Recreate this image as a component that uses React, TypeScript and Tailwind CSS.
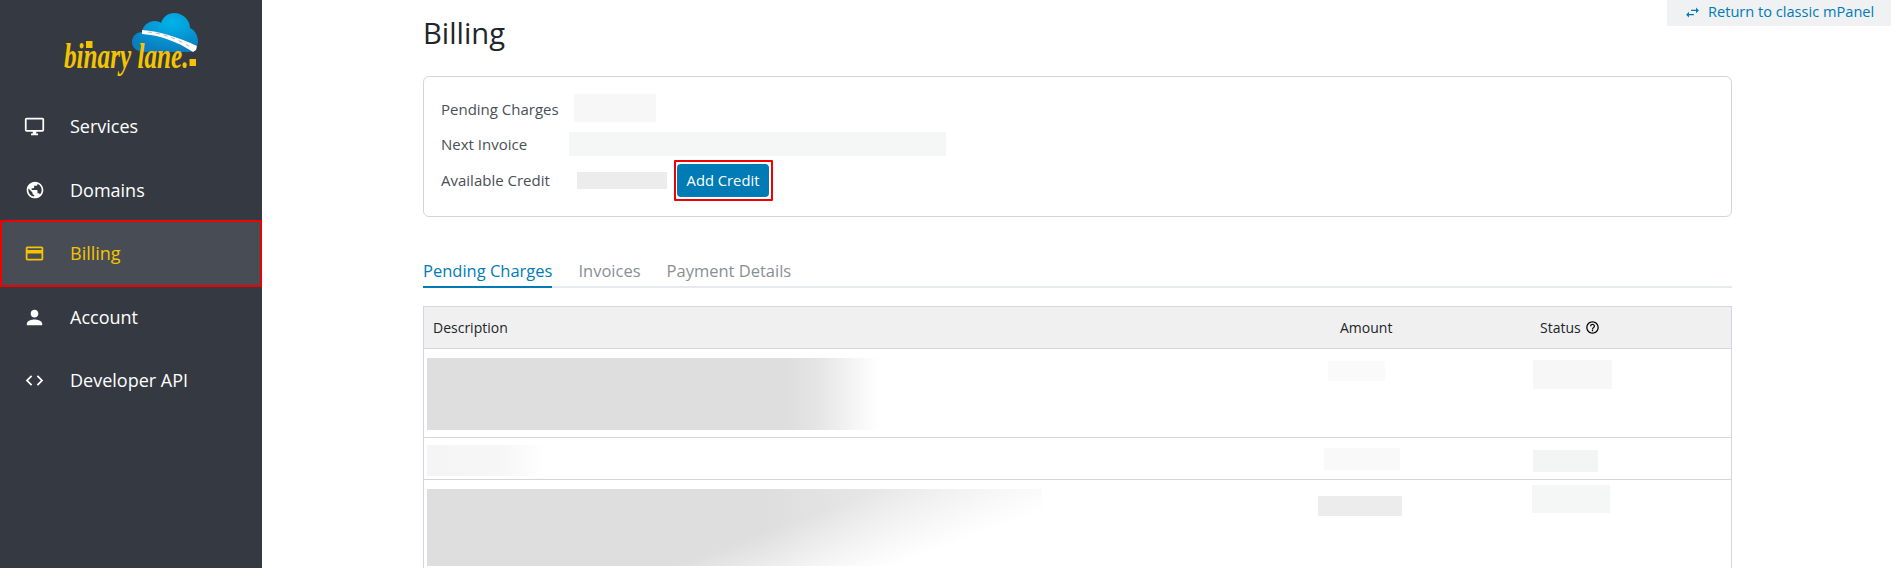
import { MdOutlineDesktopWindows, MdPublic, MdCreditCard, MdPerson, MdCode, MdSwapHoriz, MdOutlineHelpOutline } from "react-icons/md";

const nav = [
  { label: "Services", Icon: MdOutlineDesktopWindows, size: 21 },
  { label: "Domains", Icon: MdPublic, size: 20 },
  { label: "Billing", Icon: MdCreditCard, size: 21, active: true },
  { label: "Account", Icon: MdPerson, size: 23 },
  { label: "Developer API", Icon: MdCode, size: 21 },
];

function Logo() {
  return (
    <svg width="180" height="90" viewBox="40 0 180 90" className="block">
      <defs>
        <radialGradient id="cl" cx="0.6" cy="0.25" r="0.7">
          <stop offset="0" stopColor="#00b4ea" />
          <stop offset="1" stopColor="#0a7fc0" />
        </radialGradient>
      </defs>
      <path d="M146 52C136 52 132 47 132 42C132 36 137 32 142 32C143 25 149 21 155 21C158 21 160 22 161 23C163 17 168 13 174 13C183 13 190 20 190 28C195 30 198 36 198 41C198 47 194 52 188 52Z" fill="url(#cl)" />
      <path d="M142 30C160 31 180 38 197 46L196 50L193 52C178 42 160 35 142 34Z" fill="#fff" />
      <path d="M148 32C162 33 178 39 192 48" fill="none" stroke="#999" strokeWidth="0.7" strokeDasharray="4 4" />
      <text transform="translate(64 68) scale(0.72 1)" fontFamily="'Liberation Serif', serif" fontStyle="italic" fontWeight="700" fontSize="35" fill="#f5c400">binary lane.</text>
      <rect x="86" y="41" width="6.5" height="7" fill="#f5c400" />
      <rect x="189.5" y="59" width="6.5" height="7" fill="#f5c400" />
    </svg>
  );
}

function Row({ h, children }: { h: string; children: React.ReactNode }) {
  return <div className={`grid grid-cols-[906px_200px_1fr] border-b border-[#d3d6de] ${h}`}>{children}</div>;
}

export default function App() {
  return (
    <div className="relative flex h-[568px] w-[1891px] overflow-hidden bg-white font-['Open_Sans',sans-serif] text-[#495057]">
      <aside className="w-[262px] shrink-0 bg-[#353a42]">
        <div className="h-[95px] pl-[40px]">
          <Logo />
        </div>
        <nav>
          {nav.map(({ label, Icon, size, active }) => (
            <div key={label} className={`relative flex h-[63.5px] items-center text-[18px] ${active ? "text-[#f5c400]" : "text-white"}`}>
              {active && <div className="absolute inset-x-0 top-[-2px] bottom-[-1px] border-2 border-[#f00000] bg-[#484c54]" />}
              <span className="relative flex w-[70px] justify-center">
                <Icon size={size} className="ml-[-1px]" />
              </span>
              <span className="relative">{label}</span>
            </div>
          ))}
        </nav>
      </aside>

      <main className="ml-[161px] w-[1309px] shrink-0">
        <h1 className="h-[76px] pt-[10px] text-[29.2px] leading-[46px] text-[#212529]">Billing</h1>

        <section className="h-[141px] rounded-[6px] border border-[#d4d4d4] text-[15px]">
          <div className="mt-[15px] flex h-[34px] items-center pl-[17px]">
            <span className="w-[133px]">Pending Charges</span>
            <span className="mb-[2px] h-[28px] w-[82px] bg-[#f7f7f7]" />
          </div>
          <div className="flex h-[36px] items-center pl-[17px]">
            <span className="w-[128px]">Next Invoice</span>
            <span className="h-[24px] w-[377px] bg-[#f5f6f6]" />
          </div>
          <div className="flex h-[36px] items-center pl-[17px]">
            <span className="w-[136px]">Available Credit</span>
            <span className="h-[17px] w-[90px] bg-[#ececec]" />
            <span className="ml-[7px] rounded-[1px] border-2 border-[#f00000] py-[2px] pl-[1px] pr-[2px]">
              <button className="block h-[33px] w-[92px] rounded-[4px] bg-[#007bb6] text-[14.75px] text-white">Add Credit</button>
            </span>
          </div>
        </section>

        <div className="mt-[44px] flex h-[27px] gap-[26px] border-b-2 border-[#e6e9ed] text-[16.5px] leading-[20px] text-[#8a8f94]">
          <span className="h-[27px] border-b-2 border-[#007bb6] text-[#007bb6]">Pending Charges</span>
          <span>Invoices</span>
          <span>Payment Details</span>
        </div>

        <div className="mt-[18px] border-x border-t border-[#d3d6de] text-[14px]">
          <Row h="h-[42px] bg-[#f0f0f0] items-center text-[#212529]">
            <span className="pl-[9px]">Description</span>
            <span className="pl-[10px]">Amount</span>
            <span className="flex items-center gap-[4px] pl-[10px]">
              Status <MdOutlineHelpOutline size={15} className="text-black" />
            </span>
          </Row>
          <Row h="h-[89px]">
            <div className="ml-[3px] mt-[9px] h-[72px] w-[452px] bg-[linear-gradient(to_right,#dedede_0%,#dedede_80%,#e6e6e6_87%,#f6f6f6_95%,#ffffff_100%)]" />
            <div className="ml-[-2px] mt-[12px] h-[20px] w-[57px] bg-[#fafafa]" />
            <div className="ml-[3px] mt-[11px] h-[29px] w-[79px] bg-[#f7f7f7]" />
          </Row>
          <Row h="h-[42px]">
            <div className="ml-[3px] mt-[7px] h-[31px] w-[126px] bg-[linear-gradient(to_right,#f5f5f5_0%,#f6f6f6_55%,#ffffff_95%)]" />
            <div className="ml-[-6px] mt-[10px] h-[22px] w-[76px] bg-[#f9f9f9]" />
            <div className="ml-[3px] mt-[12px] h-[22px] w-[65px] bg-[#f3f4f4]" />
          </Row>
          <Row h="h-[100px]">
            <div className="ml-[3px] mt-[9px] h-[77px] w-[615px] bg-[linear-gradient(160deg,transparent_55%,#ffffff_82%),linear-gradient(to_right,#dedede_55%,#e8e8e8_75%,#efefef_100%)]" />
            <div className="ml-[-12px] mt-[16px] h-[20px] w-[84px] bg-[#ececec]" />
            <div className="ml-[2px] mt-[5px] h-[28px] w-[78px] bg-[#f5f6f6]" />
          </Row>
        </div>
      </main>

      <a className="absolute right-0 top-0 flex h-[26px] w-[224px] items-center gap-[7px] bg-[#eff1f3] pb-[2px] pl-[17px] text-[14.6px] text-[#007bb6]">
        <MdSwapHoriz size={17} />
        Return to classic mPanel
      </a>
    </div>
  );
}
